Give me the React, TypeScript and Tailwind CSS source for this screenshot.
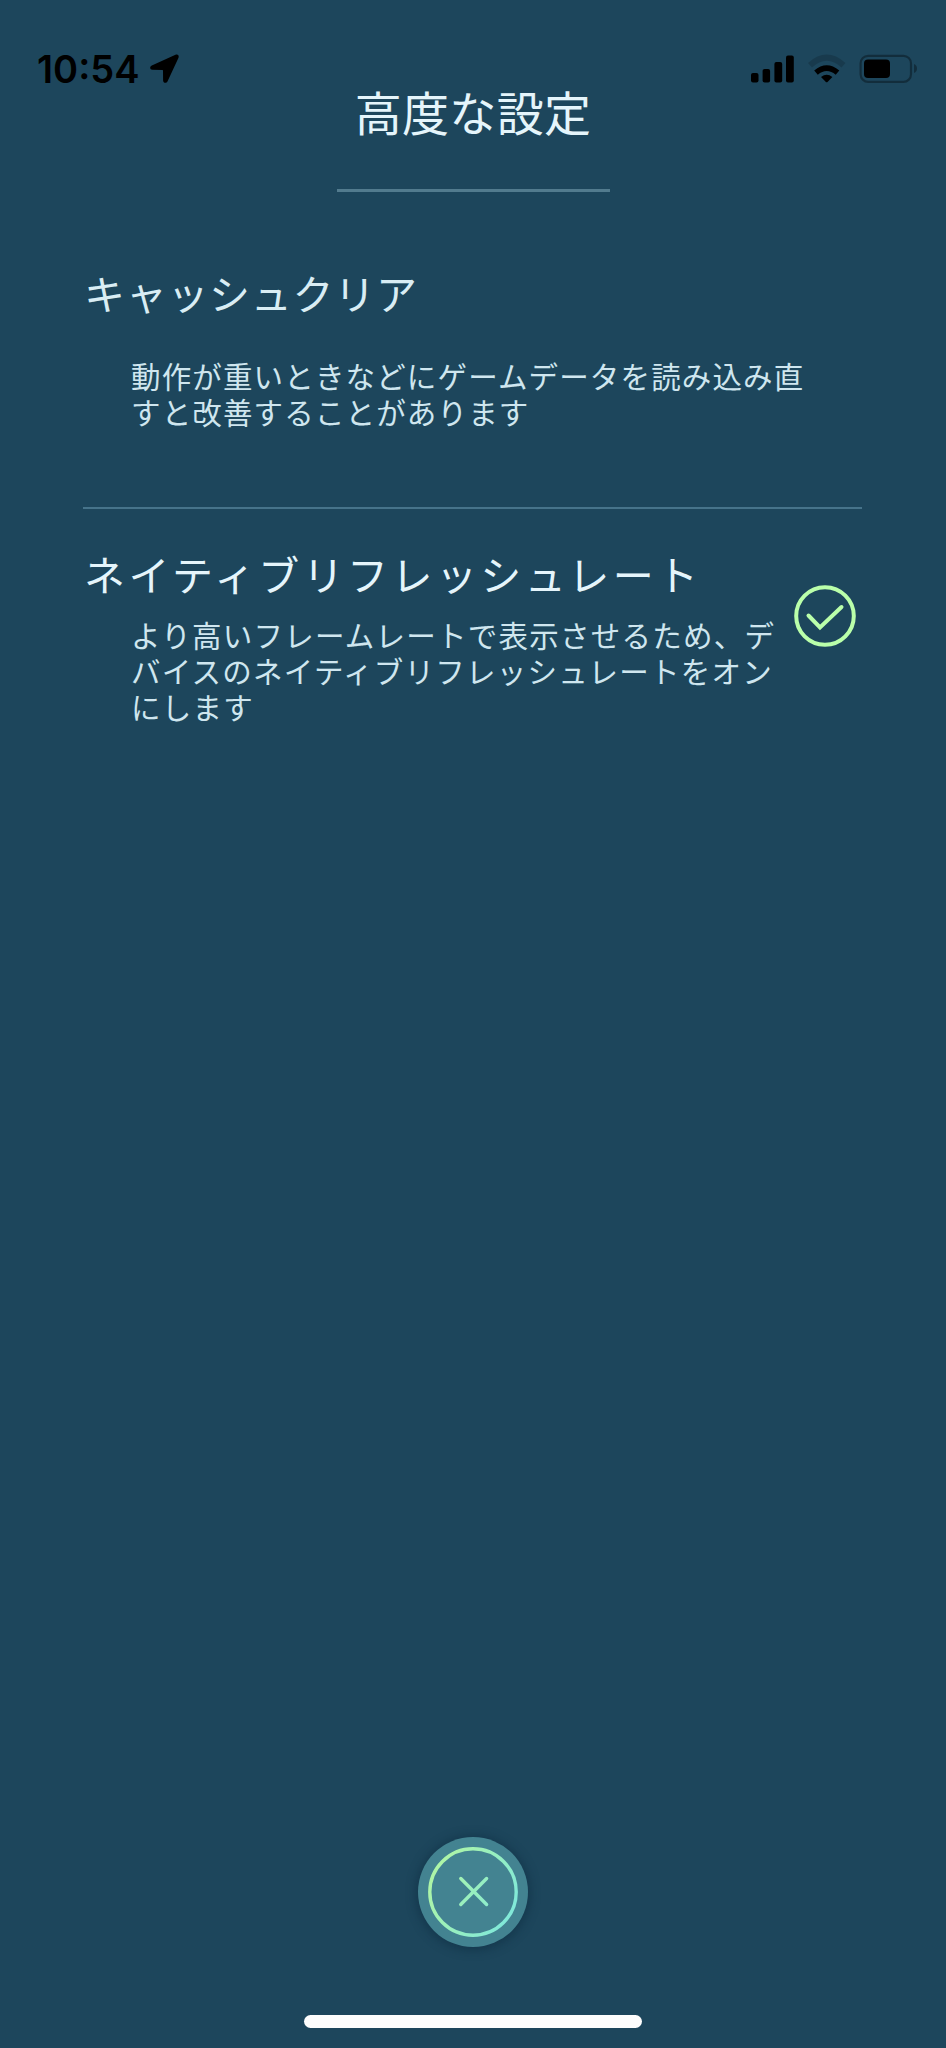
const BODY = 'ml-[48px] text-[29.5px] leading-[36.1px] text-[#cfe6ef] whitespace-nowrap';

function StatusBar() {
  return (
    <div className="h-[85px] pt-[48px] pl-[37px] pr-[28px] flex justify-between items-start text-black">
      <div className="flex items-start">
        <span className="w-[113px] font-['Inter',sans-serif] font-semibold text-[38px] leading-[42px] whitespace-nowrap">10:54</span>
        <svg width="29" height="30" viewBox="0 0 29 30" className="mt-[6px]" fill="currentColor">
          <path d="M25.5.7 1.8 11.4C-.6 12.5-.3 15.6 2.4 15.7L12.4 15.9Q13 15.9 13 16.5L13.1 26.4C13.2 29.3 16.4 29.7 17.6 27.2L28.4 3.9C29.4 1.5 27.8-.3 25.5.7Z" />
        </svg>
      </div>
      <svg width="168" height="30" viewBox="0 0 168 30" className="mt-[6px]" fill="currentColor">
        <rect x="1" y="19" width="7.5" height="9.5" rx="2" />
        <rect x="12.6" y="15" width="7.5" height="13.5" rx="2" />
        <rect x="24.4" y="8" width="7.8" height="20.5" rx="2" />
        <rect x="36" y="1.5" width="7.8" height="27" rx="2" />
        <g fill="none" stroke="currentColor">
          <path d="M60 11.2Q76.7-3.8 93.5 11.2" strokeWidth="6" opacity=".16" />
          <path d="M66 18.6Q76.7 9.6 87.5 18.6" strokeWidth="5.6" />
        </g>
        <path d="M71 23Q76.7 18.5 82.4 23L77.5 27.9Q76.7 28.6 75.9 27.9Z" />
        <rect x="110.6" y="1.8" width="50.4" height="26" rx="7.5" fill="none" stroke="currentColor" strokeWidth="2.2" opacity=".35" />
        <rect x="114" y="5.5" width="26" height="18.5" rx="4" />
        <path d="M164 10C168 11.5 168 17.5 164 19Z" opacity=".35" />
      </svg>
    </div>
  );
}

export default function App() {
  return (
    <div className="w-[946px] h-[2048px] flex flex-col bg-[#1d465c] overflow-hidden font-['Noto_Sans_CJK_JP',sans-serif]">
      <StatusBar />

      <header className="flex flex-col items-center">
        <h1 className="text-[47px] leading-[52px] tracking-[0.3px] text-[#e5f5fb]">高度な設定</h1>
        <div className="mt-[52px] w-[273px] h-[3px] bg-[#527b8e]" />
      </header>

      <main className="ml-[83px] mr-[84px] flex-1">
        <section className="h-[317px] pt-[74px] border-b-2 border-[#46738a]">
          <h2 className="ml-px text-[41px] leading-[52px] tracking-[0.7px] text-[#d9edf4]">キャッシュクリア</h2>
          <p className={`mt-[39px] tracking-[1.15px] ${BODY}`}>
            動作が重いときなどにゲームデータを読み込み直<br />
            すと改善することがあります
          </p>
        </section>

        <section className="flex items-start pt-[38px]">
          <div className="w-[711px]">
            <h2 className="ml-px text-[41px] leading-[52px] tracking-[3.4px] text-[#e5f5fb] whitespace-nowrap">ネイティブリフレッシュレート</h2>
            <p className={`mt-[17px] tracking-[1.25px] ${BODY}`}>
              より高いフレームレートで表示させるため、デ<br />
              バイスのネイティブリフレッシュレートをオン<br />
              にします
            </p>
          </div>
          <svg width="62" height="62" viewBox="0 0 62 62" className="mt-[38px] shrink-0" fill="none" stroke="#baffaa" strokeWidth="4">
            <circle cx="31" cy="31" r="28.8" />
            <path d="M14.5 30.5 26 42.5 47.5 22" strokeLinecap="round" />
          </svg>
        </section>
      </main>

      <footer className="flex flex-col items-center">
        <button className="size-[110px] rounded-full bg-[#438391] shadow-[0_1px_8px_3px_rgba(13,46,66,0.5)]">
          <svg width="110" height="110" viewBox="0 0 110 110" fill="none" stroke="url(#ring)" strokeWidth="3.4" strokeLinecap="round">
            <defs>
              <linearGradient id="ring" gradientUnits="userSpaceOnUse" x1="20" y1="35" x2="92" y2="75">
                <stop offset="0" stopColor="#adf5a8" />
                <stop offset="1" stopColor="#82e9d8" />
              </linearGradient>
            </defs>
            <circle cx="55" cy="55" r="43.2" />
            <path d="M42.8 41.5 68.6 67.5M68.6 41.5 42.8 67.5" />
          </svg>
        </button>
        <div className="mt-[68px] mb-[20px] w-[338px] h-[13px] rounded-full bg-[#fdfdfd]" />
      </footer>
    </div>
  );
}
